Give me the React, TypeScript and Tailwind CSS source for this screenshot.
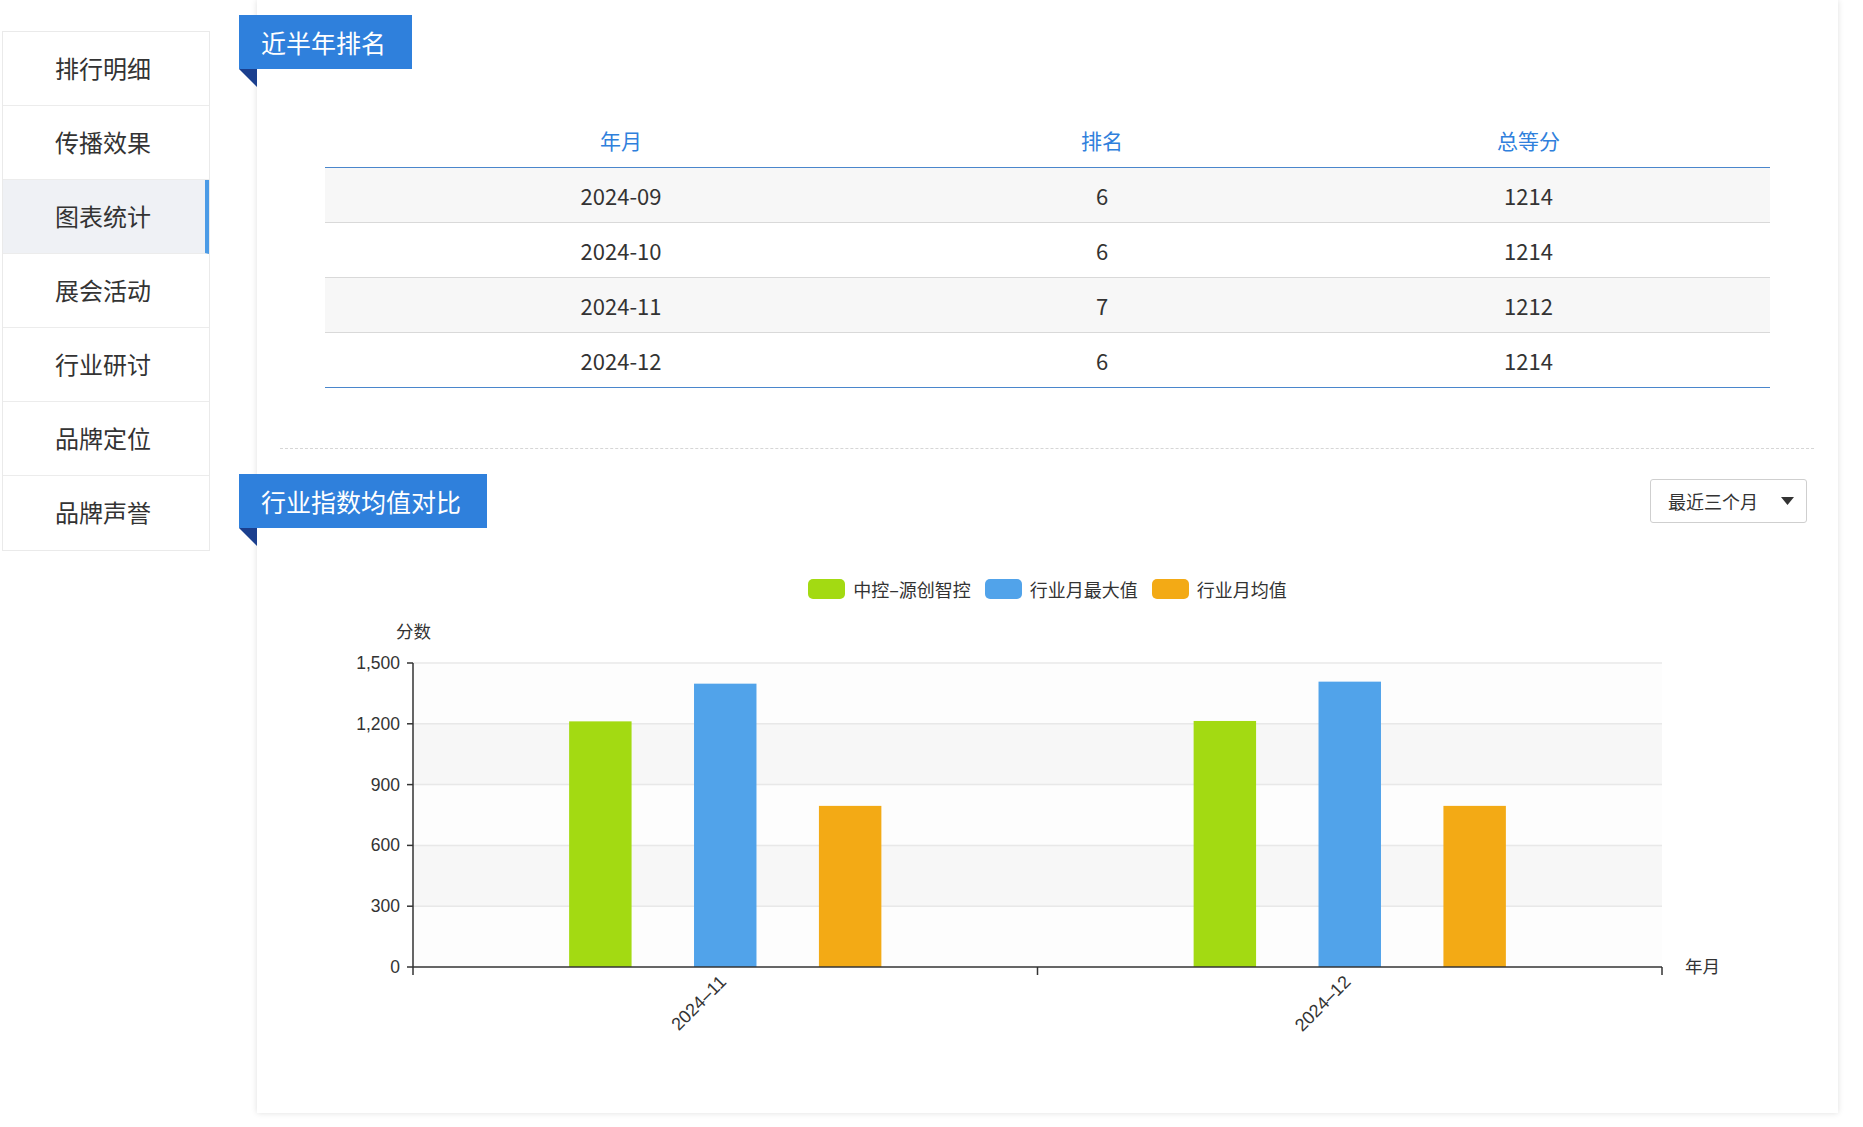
import React from "react";

const menu = ["排行明细", "传播效果", "图表统计", "展会活动", "行业研讨", "品牌定位", "品牌声誉"];
const rows = [
  ["2024-09", "6", "1214"],
  ["2024-10", "6", "1214"],
  ["2024-11", "7", "1212"],
  ["2024-12", "6", "1214"],
];

function Badge({ text }: { text: string }) {
  return (
    <div className="relative ml-[-18px] w-fit">
      <div className="h-[54px] bg-[#2f80dc] pl-[22px] pr-[26px] flex items-center text-white text-[25px] leading-none">
        {text}
      </div>
      <svg className="absolute left-0 top-[54px]" width="18" height="18" viewBox="0 0 18 18">
        <polygon points="0,0 18,0 18,18" fill="#1b3f8e" />
      </svg>
    </div>
  );
}

function Chart() {
  const x0 = 156;
  const x1 = 1405;
  const yTop = 62;
  const yZero = 366;
  const h = yZero - yTop;
  const catW = (x1 - x0) / 2;
  const barW = catW / 10;
  const data = [
    { label: "2024-11", vals: [1212, 1398, 795] },
    { label: "2024-12", vals: [1214, 1408, 795] },
  ];
  const colors = ["#a3da12", "#51a3ea", "#f3aa15"];
  const yv = (v: number) => yZero - (v / 1500) * h;
  const ticks = [0, 300, 600, 900, 1200, 1500];
  return (
    <svg width="1581" height="460" viewBox="0 0 1581 460" className="block mt-[2px]">
      <rect x={x0} y={yv(1500)} width={x1 - x0} height={yv(1200) - yv(1500)} fill="#fdfdfd" />
      <rect x={x0} y={yv(1200)} width={x1 - x0} height={yv(900) - yv(1200)} fill="#f7f7f7" />
      <rect x={x0} y={yv(900)} width={x1 - x0} height={yv(600) - yv(900)} fill="#fdfdfd" />
      <rect x={x0} y={yv(600)} width={x1 - x0} height={yv(300) - yv(600)} fill="#f7f7f7" />
      <rect x={x0} y={yv(300)} width={x1 - x0} height={yv(0) - yv(300)} fill="#fdfdfd" />
      {ticks.slice(1).map((t) => (
        <line key={t} x1={x0} x2={x1} y1={yv(t)} y2={yv(t)} stroke="#e8e8e8" strokeWidth="1.5" />
      ))}
      {data.map((d, ci) => {
        const cx = x0 + catW * ci + catW / 2;
        return d.vals.map((v, bi) => {
          const bx = cx + (bi - 1) * 2 * barW - barW / 2;
          return <rect key={ci + "-" + bi} x={bx} y={yv(v)} width={barW} height={yZero - yv(v)} fill={colors[bi]} />;
        });
      })}
      <line x1={x0} x2={x0} y1={yTop} y2={yZero + 8} stroke="#333" strokeWidth="1.5" />
      <line x1={x0} x2={x1} y1={yZero} y2={yZero} stroke="#333" strokeWidth="1.5" />
      {[x0 + catW, x1].map((x) => (
        <line key={x} x1={x} x2={x} y1={yZero} y2={yZero + 8} stroke="#333" strokeWidth="1.5" />
      ))}
      {ticks.map((t) => (
        <g key={t}>
          <line x1={x0 - 6} x2={x0} y1={yv(t)} y2={yv(t)} stroke="#333" strokeWidth="1.5" />
          <text x={x0 - 13} y={yv(t) + 6} textAnchor="end" fontSize="17.5" fill="#333" fontFamily="Liberation Sans, Arial, sans-serif">
            {t.toLocaleString("en-US")}
          </text>
        </g>
      ))}
      <text x={x0 - 17} y={37} fontSize="17.5" fill="#333" fontFamily="Noto Sans CJK SC, sans-serif">分数</text>
      <text x={x1 + 23} y={yZero + 6} fontSize="17.5" fill="#333" fontFamily="Noto Sans CJK SC, sans-serif">年月</text>
      {data.map((d, ci) => {
        const cx = x0 + catW * ci + catW / 2 + 2;
        const cy = yZero + 16;
        return (
          <text key={d.label} x={cx} y={cy} textAnchor="end" fontSize="18" fill="#333" fontFamily="Liberation Sans, Arial, sans-serif" transform={`rotate(-45 ${cx} ${cy})`}>
            {d.label.replace("-", "–")}
          </text>
        );
      })}
    </svg>
  );
}

export default function App() {
  return (
    <div className="w-[1863px] h-[1127px] bg-white flex font-['Noto_Sans_CJK_SC',sans-serif] text-[#333] overflow-hidden">
      <div className="ml-[2px] mt-[31px] w-[208px] h-fit border border-[#eaeaea] bg-white">
        {menu.map((m, i) => (
          <div
            key={m}
            className={
              i === 2
                ? "h-[74px] flex items-center justify-center pr-[2px] pb-[2px] text-[24px] bg-[#eff1f5] border-r-4 border-r-[#4b9be6] border-b border-b-[#ececec]"
                : i === menu.length - 1
                ? "h-[74px] flex items-center justify-center pr-[6px] pb-[2px] text-[24px]"
                : "h-[74px] flex items-center justify-center pr-[6px] pb-[2px] text-[24px] border-b border-b-[#ececec]"
            }
          >
            {m}
          </div>
        ))}
      </div>
      <div className="ml-[47px] w-[1581px] h-[1113px] bg-white shadow-[0_0_6px_rgba(0,0,0,0.13)] pt-[15px]">
        <Badge text="近半年排名" />
        <div className="mx-[68px] mt-[44px]">
          <div className="grid grid-cols-[592px_370px_1fr] h-[55px] items-center pt-[2px] border-b border-[#4a86cc] text-[#2f80dc] text-[21px] text-center">
            <div>年月</div>
            <div>排名</div>
            <div>总等分</div>
          </div>
          {rows.map((r, i) => (
            <div
              key={r[0]}
              className={
                i === 3
                  ? "grid grid-cols-[592px_370px_1fr] h-[55px] items-center border-b border-[#4a86cc] text-[22px] text-center bg-white"
                  : i % 2 === 0
                  ? "grid grid-cols-[592px_370px_1fr] h-[55px] items-center border-b border-[#d9d9d9] text-[22px] text-center bg-[#f7f7f7]"
                  : "grid grid-cols-[592px_370px_1fr] h-[55px] items-center border-b border-[#d9d9d9] text-[22px] text-center bg-white"
              }
            >
              <div>{r[0]}</div>
              <div>{r[1]}</div>
              <div>{r[2]}</div>
            </div>
          ))}
        </div>
        <div className="ml-[23px] mr-[24px] mt-[60px] border-t border-dashed border-[#d6d6d6]" />
        <div className="mt-[25px] flex items-center justify-between">
          <Badge text="行业指数均值对比" />
          <div className="mr-[31px] w-[157px] h-[44px] border border-[#cfcfcf] rounded-[3px] flex items-center justify-between pl-[17px] pr-[12px] text-[18px]">
            <span>最近三个月</span>
            <svg width="13" height="8" viewBox="0 0 13 8">
              <polygon points="0,0 13,0 6.5,8" fill="#333" />
            </svg>
          </div>
        </div>
        <div className="mt-[51px] h-[20px] flex items-center justify-center text-[18px]">
          <div className="w-[37px] h-[20px] rounded-[5px] bg-[#a3da12]" />
          <span className="ml-[8px] mr-[14px]">中控–源创智控</span>
          <div className="w-[37px] h-[20px] rounded-[5px] bg-[#51a3ea]" />
          <span className="ml-[8px] mr-[14px]">行业月最大值</span>
          <div className="w-[37px] h-[20px] rounded-[5px] bg-[#f3aa15]" />
          <span className="ml-[8px]">行业月均值</span>
        </div>
        <Chart />
      </div>
    </div>
  );
}
